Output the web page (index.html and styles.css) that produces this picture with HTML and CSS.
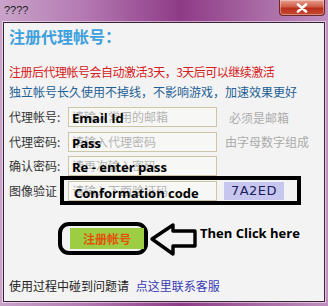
FILE: index.html
```html
<!DOCTYPE html>
<html>
<head>
<meta charset="utf-8">
<link rel="stylesheet" href="styles.css">
</head>
<body>
<div class="window">
  <div class="titlebar">
    <span class="title">????</span>
    <div class="close">
      <svg width="14" height="10" viewBox="0 0 14 10"><path d="M3 1.5 L11 8.5 M11 1.5 L3 8.5" stroke="#fff" stroke-width="2.6" stroke-linecap="round"/></svg>
    </div>
  </div>
  <div class="panel">
    <h1 class="heading">注册代理帐号：</h1>
    <p class="notice red">注册后代理帐号会自动激活3天，3天后可以继续激活</p>
    <p class="notice blue">独立帐号长久使用不掉线，不影响游戏，加速效果更好</p>
    <div class="form">
      <div class="row">
        <span class="label">代理帐号:</span>
        <div class="field"><span class="ph">请输入常用的邮箱</span><span class="note">Email Id</span></div>
        <span class="hint">必须是邮箱</span>
      </div>
      <div class="row">
        <span class="label">代理密码:</span>
        <div class="field"><span class="ph">请输入代理密码</span><span class="note">Pass</span></div>
        <span class="hint hint2">由字母数字组成</span>
      </div>
      <div class="row">
        <span class="label">确认密码:</span>
        <div class="field"><span class="ph">请再次输入密码</span><span class="note">Re - enter pass</span></div>
      </div>
      <div class="row captcha-row">
        <span class="label">图像验证</span>
        <div class="field"><span class="ph">请输入下面验证码</span><span class="note note4">Conformation code</span></div>
        <div class="captcha">7A2ED</div>
        <div class="highlight"></div>
      </div>
    </div>
    <div class="action">
      <div class="ring"><div class="btn">注册帐号</div></div>
      <svg class="arrow" width="50" height="36" viewBox="0 0 50 36"><path d="M3 17 L24 3 L24 9 L46 9 L46 24 L24 24 L24 32 Z" fill="none" stroke="#000" stroke-width="3.4" stroke-linejoin="round"/></svg>
      <span class="then">Then Click here</span>
    </div>
    <div class="footer">使用过程中碰到问题请 <a class="link">点这里联系客服</a></div>
  </div>
</div>
</body>
</html>
```

FILE: styles.css
```css
* { box-sizing: border-box; }
html, body { margin: 0; padding: 0; }
body {
  width: 328px;
  height: 306px;
  overflow: hidden;
  font-family: "Noto Sans CJK SC", "Noto Sans", sans-serif;
}
.window {
  width: 328px;
  height: 306px;
  background: linear-gradient(90deg, #c9a3c9 0%, #b47ab3 25%, #8e3b86 55%, #a4619f 75%, #c08fbf 100%);
  padding: 0 2px 4px 2px;
  display: flex;
  flex-direction: column;
}
.titlebar {
  height: 22px;
  display: flex;
  align-items: flex-start;
  justify-content: space-between;
  flex-shrink: 0;
}
.title {
  font-family: "Liberation Sans", sans-serif;
  font-size: 11px;
  color: #222;
  margin: 4px 0 0 2px;
  line-height: 12px;
}
.close {
  width: 46px;
  height: 16px;
  margin-right: 1px;
  border: 1px solid #6b2a2a;
  border-top: none;
  border-radius: 0 0 4px 4px;
  background: linear-gradient(180deg, #e8a090 0%, #d05a48 45%, #b8301c 55%, #c84830 100%);
  display: flex;
  align-items: center;
  justify-content: center;
  box-shadow: inset 0 0 0 1px rgba(255,255,255,0.35);
}
.panel {
  flex: 1;
  margin: 0 1px;
  background: #f3f3f3;
  border: 1px solid #3b2438;
  box-shadow: 0 0 0 1px rgba(255,255,255,0.5);
  padding: 4px 5px 0 5px;
  position: relative;
}
.heading {
  margin: 0;
  font-size: 16px;
  line-height: 18px;
  font-weight: bold;
  color: #3ea0dc;
}
.notice {
  margin: 0;
  font-size: 12px;
  line-height: 16px;
  height: 20px;
}
.notice.red { color: #d42020; margin-top: 19px; letter-spacing: -0.5px; }
.notice.blue { color: #1f5f94; }
.form {
  margin-top: 3px;
  display: flex;
  flex-direction: column;
  gap: 4.5px;
}
.row {
  display: flex;
  align-items: center;
  height: 20px;
  position: relative;
}
.label {
  width: 59px;
  font-size: 12px;
  color: #333;
  line-height: 16px;
}
.field {
  width: 149px;
  height: 20px;
  border: 1px solid #cbc6a6;
  background: #f7f7f5;
  position: relative;
  overflow: hidden;
}
.ph {
  position: absolute;
  left: 3px;
  top: 1px;
  font-size: 12px;
  line-height: 16px;
  color: #b4b4b4;
  white-space: nowrap;
}
.note {
  position: absolute;
  left: 3px;
  top: 1px;
  font-family: "Open Sans", sans-serif;
  font-weight: bold;
  font-size: 13px;
  line-height: 18px;
  color: #000;
  white-space: nowrap;
}
.note4 { left: 5px; top: 2px; }
.hint {
  margin-left: 12px;
  font-size: 12px;
  color: #ababab;
}
.hint2 { margin-left: 8px; }
.captcha {
  margin-left: 7px;
  width: 60px;
  height: 18px;
  background: #c6c6ef;
  color: #1c1c5c;
  font-family: "DejaVu Sans", sans-serif;
  font-size: 13px;
  line-height: 18px;
  text-align: center;
  letter-spacing: 0.5px;
}
.highlight {
  position: absolute;
  left: 51px;
  top: -4.5px;
  width: 241px;
  height: 29px;
  border: 4px solid #000;
}
.action {
  margin-top: 21px;
  display: flex;
  align-items: flex-start;
  padding-left: 49px;
}
.ring {
  width: 90px;
  height: 33px;
  border: 4px solid #000;
  border-radius: 11px;
  padding: 2px 0 0 8px;
}
.btn {
  width: 74px;
  height: 21px;
  background: #9ccd42;
  color: #e2520e;
  font-size: 12px;
  font-weight: bold;
  line-height: 21px;
  text-align: center;
}
.arrow {
  margin-left: 1px;
  margin-top: 0;
}
.then {
  margin-left: 1px;
  margin-top: 2px;
  font-family: "Open Sans", sans-serif;
  font-weight: bold;
  font-size: 13px;
  line-height: 18px;
  color: #000;
}
.footer {
  margin-top: 20px;
  font-size: 12px;
  line-height: 16px;
  color: #222;
}
.link {
  color: #3a3ab4;
  margin-left: 4px;
}
```
